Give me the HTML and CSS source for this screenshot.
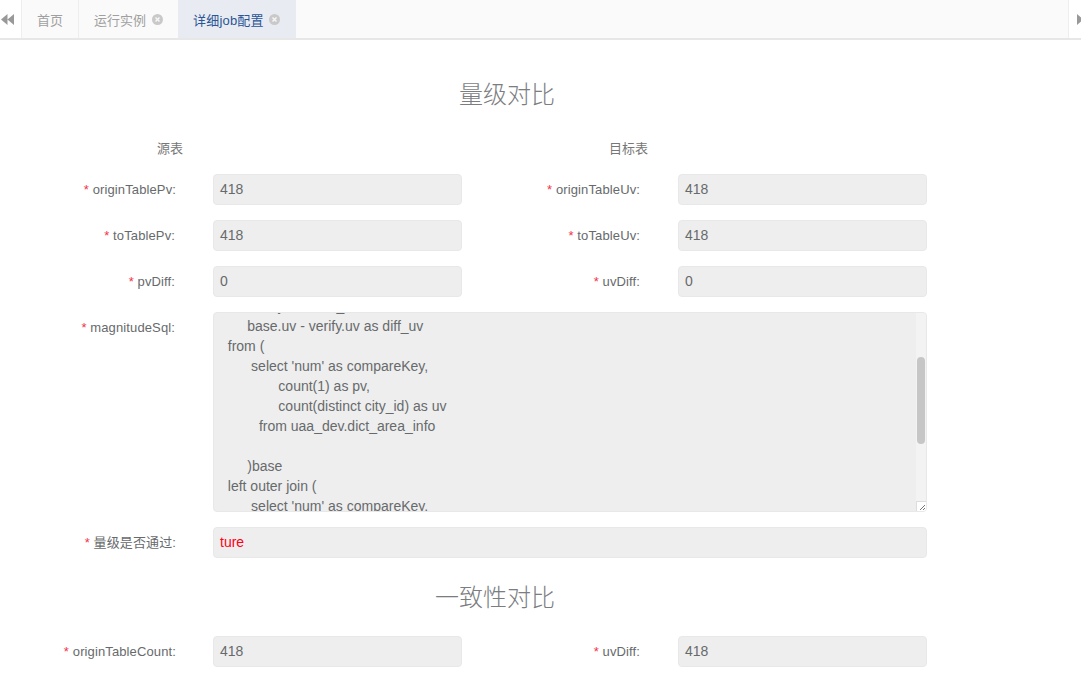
FILE: index.html
```html
<!DOCTYPE html>
<html lang="zh">
<head>
<meta charset="utf-8">
<title>详细job配置</title>
<link rel="stylesheet" href="styles.css">
</head>
<body>
<nav class="tabs">
  <button class="nav-btn nav-left" aria-label="向左">
    <svg width="13" height="11" viewBox="0 0 13 11"><path d="M6.500 0v11L0 5.500zM13 0v11L6.500 5.500z"/></svg>
  </button>
  <a class="tab tab-home">首页</a>
  <a class="tab tab-run">运行实例<svg class="close" width="11" height="11" viewBox="0 0 11 11"><circle cx="5.500" cy="5.500" r="5.500"/><path d="M3.500 3.500l4 4M7.500 3.500l-4 4"/></svg></a>
  <a class="tab tab-active">详细job配置<svg class="close" width="11" height="11" viewBox="0 0 11 11"><circle cx="5.500" cy="5.500" r="5.500"/><path d="M3.500 3.500l4 4M7.500 3.500l-4 4"/></svg></a>
  <div class="tab-fill"></div>
  <button class="nav-btn nav-right" aria-label="向右">
    <svg width="7" height="11" viewBox="0 0 7 11"><path d="M0 0v11L6.500 5.500z"/></svg>
  </button>
</nav>

<main class="page">
  <h2 class="title title-one">量级对比</h2>
  <div class="sub-heads">
    <span class="sub-a">源表</span>
    <span class="sub-b">目标表</span>
  </div>

  <form class="form">
    <label class="lab"><i>*</i> originTablePv:</label>
    <div class="field">418</div>
    <label class="lab"><i>*</i> originTableUv:</label>
    <div class="field">418</div>

    <label class="lab"><i>*</i> toTablePv:</label>
    <div class="field">418</div>
    <label class="lab"><i>*</i> toTableUv:</label>
    <div class="field">418</div>

    <label class="lab"><i>*</i> pvDiff:</label>
    <div class="field">0</div>
    <label class="lab"><i>*</i> uvDiff:</label>
    <div class="field">0</div>

    <label class="lab"><i>*</i> magnitudeSql:</label>
    <div class="field-wide area">
      <div class="area-clip"><pre class="area-text">        verify.uv as to_uv,
       base.uv - verify.uv as diff_uv
  from (
        select 'num' as compareKey,
               count(1) as pv,
               count(distinct city_id) as uv
          from uaa_dev.dict_area_info

       )base
  left outer join (
        select 'num' as compareKey,</pre></div>
      <div class="scrollbar"><div class="thumb"></div></div>
      <div class="resizer"><svg width="9" height="9" viewBox="0 0 9 9"><path d="M3 8l5-5M6 8l2-2"/></svg></div>
    </div>

    <label class="lab"><i>*</i> 量级是否通过:</label>
    <div class="field-wide field-red">ture</div>
  </form>

  <h2 class="title title-two">一致性对比</h2>

  <div class="form form-two">
    <label class="lab"><i>*</i> originTableCount:</label>
    <div class="field">418</div>
    <label class="lab"><i>*</i> uvDiff:</label>
    <div class="field">418</div>
  </div>
</main>
</body>
</html>
```
FILE: styles.css
```css
* { box-sizing: border-box; }
html, body { margin: 0; height: 677px; overflow: hidden; background: #fff; }
body { font-family: "Liberation Sans", "Noto Sans CJK SC", sans-serif; font-size: 14px; color: #676a6c; }

.tabs { display: flex; height: 40px; border-bottom: 2px solid #e7e7e7; background: #fafafa; }
.nav-btn { padding: 0; border: 0; background: #fff; display: flex; align-items: center; flex: none; }
.nav-btn svg { fill: #999; display: block; flex: none; }
.nav-left { width: 22px; border-right: 1px solid #eee; padding-left: 1px; }
.nav-right { width: 13px; border-left: 1px solid #eee; padding-left: 8px; overflow: hidden; }
.tab { display: flex; align-items: center; gap: 6px; padding: 0 15px; font-size: 13px; color: #a0a0a0; white-space: nowrap; flex: none; }
.tab-home { width: 57px; border-right: 1px solid #eee; }
.tab-run { width: 99px; }
.tab-active { width: 118px; background: #e8ebf1; color: #2a5596; letter-spacing: 0.200px; gap: 5px; }
.tab-fill { flex: 1; }
.close circle { fill: #c9c9c9; }
.close path { stroke: #f5f5f5; stroke-width: 1.600; fill: none; }

.page { display: block; }
.title { margin: 0; font-size: 24px; font-weight: 300; line-height: 34px; color: #7b7d7f; text-align: center; }
.title-one { padding: 38px 0 0 13px; width: 1001px; }
.title-two { width: 990px; padding-top: 23px; }

.sub-heads { display: flex; height: 20px; margin-top: 27px; font-size: 13px; line-height: 20px; color: #777; }
.sub-a { margin-left: 157px; }
.sub-b { margin-left: 426px; }

.form { display: grid; grid-template-columns: 213px 249px 216px 249px; row-gap: 15px; margin-top: 15px; }
.form-two { margin-top: 21px; }
.lab { text-align: right; line-height: 31px; font-size: 13px; letter-spacing: 0.120px; white-space: nowrap; padding-right: 37px; }
.field + .lab { padding-right: 38px; }
.lab i { font-style: normal; color: #f3334a; }
.field, .field-wide { height: 31px; line-height: 29px; padding: 0 6px; background: #eee; border: 1px solid #e8e8e8; border-radius: 4px; }
.field-wide { grid-column: 2 / span 3; width: 714px; }
.field-red { color: #ff0015; }

.area { position: relative; display: flex; height: 200px; padding: 0; overflow: hidden; }
.area-clip { flex: 1; overflow: hidden; padding: 0 6px; }
.area-text { margin: -17px 0 0; font: inherit; line-height: 20px; white-space: pre; color: #676a6c; }
.scrollbar { width: 10px; flex: none; background: #f3f3f3; padding: 44px 1px 0 1px; }
.thumb { height: 87px; background: #c6c6c6; border-radius: 4px; }
.resizer { position: absolute; right: 0; bottom: 0; width: 10px; height: 10px; background: #fff; border-left: 1px solid #ddd; border-top: 1px solid #ddd; }
.resizer svg { display: block; stroke: #777; stroke-width: 1; fill: none; }
```
